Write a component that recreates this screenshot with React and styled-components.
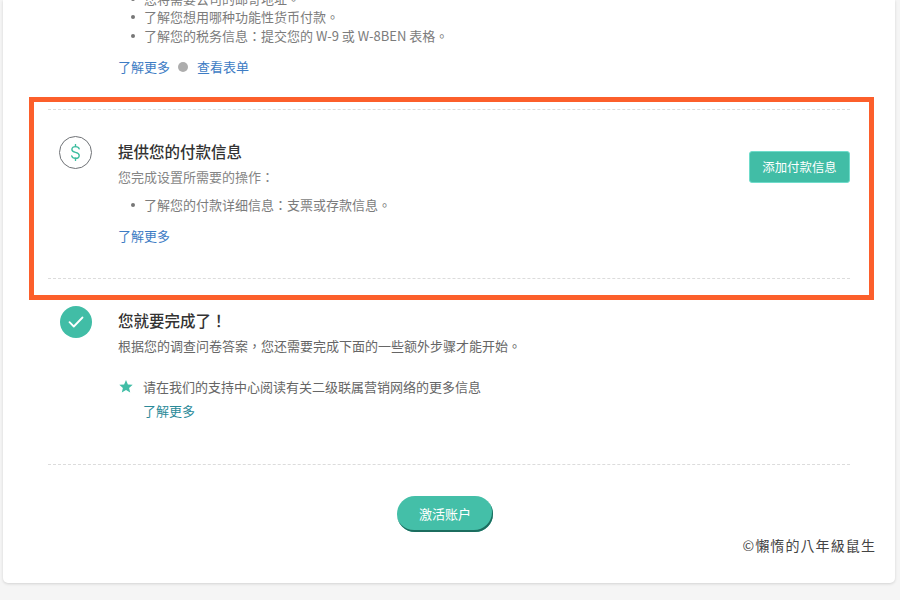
import React from 'react';
import styled, { createGlobalStyle } from 'styled-components';

const GlobalStyle = createGlobalStyle`
  html, body {
    margin: 0;
    padding: 0;
    height: 600px;
    overflow: hidden;
    background: #f5f5f5;
    font-family: "Noto Sans CJK TC", "Liberation Sans", sans-serif;
  }
`;

const Page = styled.div`
  height: 600px;
  overflow: hidden;
  padding: 0 5px 0 3px;
  box-sizing: border-box;
`;
const Card = styled.main`
  position: relative;
  display: flex;
  flex-direction: column;
  height: 583px;
  box-sizing: border-box;
  padding: 0 45px;
  background: #fff;
  border-radius: 0 0 5px 5px;
  box-shadow: 0 1px 3px rgba(0, 0, 0, 0.14);
`;
const Highlight = styled.div`
  position: absolute;
  left: 26px;
  top: 97px;
  width: 845px;
  height: 203px;
  box-sizing: border-box;
  border: 5px solid #fc5f2b;
  pointer-events: none;
`;
const TopBlock = styled.section`
  height: 109px;
  padding-left: 70px;
  overflow: hidden;
  box-sizing: border-box;
`;
const BulletList = styled.ul`
  margin: ${(p) => p.$margin || '0'};
  padding: 0 0 0 26px;
  list-style: none;
  color: #7c7c7c;
  font-size: 13px;
  line-height: 18.3px;
`;
const Bullet = styled.li`
  position: relative;
  white-space: nowrap;
  &::before {
    content: '';
    position: absolute;
    left: -13px;
    top: 7px;
    width: 4px;
    height: 4px;
    border-radius: 50%;
    background: #777;
  }
`;
const LinkRow = styled.div`
  display: flex;
  align-items: center;
  gap: 8px;
  margin-top: ${(p) => p.$top || '13px'};
  height: 18px;
`;
const MoreLink = styled.a`
  color: ${(p) => p.$color || '#3d7cc4'};
  font-size: 13px;
  line-height: 18px;
`;
const Dot = styled.span`
  width: 10px;
  height: 10px;
  margin-right: 1px;
  border-radius: 50%;
  background: #adadad;
`;
const Rule = styled.hr`
  margin: 0;
  height: 0;
  flex: none;
  border: 0;
  border-top: 1px dashed #dcdcdc;
`;
const PaySection = styled.section`
  display: flex;
  height: 168px;
  padding-top: 26px;
  box-sizing: border-box;
`;
const DoneSection = styled.section`
  display: flex;
  height: 185px;
  padding-top: 27px;
  box-sizing: border-box;
`;
const IconCell = styled.div`
  flex: none;
  width: 70px;
  padding-left: 11px;
  box-sizing: border-box;
`;
const Ring = styled.div`
  display: flex;
  align-items: center;
  justify-content: center;
  width: 33px;
  height: 33px;
  box-sizing: border-box;
  border: 1px solid #6f7276;
  border-radius: 50%;
  color: #3dbd9f;
`;
const CheckDisc = styled(Ring)`
  width: 32px;
  height: 32px;
  margin-left: 1px;
  border: 0;
  background: #41bda6;
  color: #fff;
`;
const Body = styled.div`
  flex: 1;
  min-width: 0;
`;
const Title = styled.h3`
  margin: ${(p) => p.$margin || '4px 0 0'};
  color: #333;
  font-size: 15.5px;
  line-height: 22px;
  font-weight: 500;
`;
const Intro = styled.p`
  margin: ${(p) => p.$margin || '6px 0 0'};
  color: ${(p) => p.$color || '#858585'};
  font-size: 13px;
  line-height: 18px;
  white-space: nowrap;
`;
const SolidButton = styled.button`
  flex: none;
  align-self: flex-start;
  width: 101px;
  height: 32px;
  margin-top: 15px;
  padding: 0 0 1px;
  border: 1px solid #6fdccb;
  border-radius: 3px;
  background: #41bda6;
  color: #fff;
  font-family: inherit;
  font-size: 12.4px;
`;
const StarRow = styled.div`
  display: flex;
  gap: 10px;
  margin-top: 22px;
  padding-left: 1px;
  align-items: center;
  height: 18px;
  color: #666;
  font-size: 13px;
  white-space: nowrap;
`;
const Indent = styled.div`
  padding-left: 25px;
  margin-top: 2px;
`;
const Footer = styled.div`
  display: flex;
  justify-content: center;
  padding: 31px 8px 0 0;
`;
const PillButton = styled.button`
  width: 96px;
  height: 36px;
  padding: 0 0 2px;
  border: 0;
  border-radius: 18px;
  background: #44bfa8;
  box-shadow: inset -1px -2px 0 #1c6d5f;
  color: #fff;
  font-family: inherit;
  font-size: 13px;
`;
const Credit = styled.div`
  position: absolute;
  right: 19px;
  top: 535px;
  color: #444;
  font-size: 14px;
  line-height: 20px;
  letter-spacing: 1.1px;
`;

const Dollar = () => (
  <svg width="13" height="17" viewBox="0 0 13 17" fill="none" stroke="currentColor" strokeWidth="1.4" strokeLinecap="round">
    <path d="M10.2 4.9C9.8 3.4 8.3 2.6 6.5 2.6 4.4 2.6 2.9 3.7 2.9 5.4c0 1.8 1.6 2.5 3.6 3 2.1.5 3.7 1.2 3.7 3 0 1.7-1.6 2.9-3.7 2.9-1.9 0-3.4-.8-3.8-2.4" />
    <path d="M6.5 .6v2M6.5 14.3v2.1" />
  </svg>
);
const Check = () => (
  <svg width="16" height="12" viewBox="0 0 16 12" fill="none" stroke="currentColor" strokeWidth="1.8" strokeLinecap="round" strokeLinejoin="round">
    <path d="M1.5 6.2 5.8 10.5 14.5 1.5" />
  </svg>
);
const Star = () => (
  <svg width="14" height="13" viewBox="0 0 14 13" fill="#41bda6">
    <path d="M7 0l1.9 4.4 4.8.4-3.6 3.1 1.1 4.7L7 10.1l-4.2 2.5 1.1-4.7L.3 4.8l4.8-.4z" />
  </svg>
);

const App = () => (
  <Page>
    <GlobalStyle />
    <Card>
      <TopBlock>
        <BulletList $margin="-10px 0 0">
          <Bullet>您将需要公司的邮寄地址。</Bullet>
          <Bullet>了解您想用哪种功能性货币付款。</Bullet>
          <Bullet>了解您的税务信息：提交您的 W-9 或 W-8BEN 表格。</Bullet>
        </BulletList>
        <LinkRow>
          <MoreLink>了解更多</MoreLink>
          <Dot />
          <MoreLink>查看表单</MoreLink>
        </LinkRow>
      </TopBlock>
      <Rule />
      <PaySection>
        <IconCell>
          <Ring><Dollar /></Ring>
        </IconCell>
        <Body>
          <Title>提供您的付款信息</Title>
          <Intro>您完成设置所需要的操作：</Intro>
          <BulletList $margin="10px 0 0">
            <Bullet>了解您的付款详细信息：支票或存款信息。</Bullet>
          </BulletList>
          <LinkRow $top="13px">
            <MoreLink>了解更多</MoreLink>
          </LinkRow>
        </Body>
        <SolidButton>添加付款信息</SolidButton>
      </PaySection>
      <Rule />
      <DoneSection>
        <IconCell>
          <CheckDisc><Check /></CheckDisc>
        </IconCell>
        <Body>
          <Title $margin="3px 0 0">您就要完成了！</Title>
          <Intro $color="#666" $margin="6px 0 0">根据您的调查问卷答案，您还需要完成下面的一些额外步骤才能开始。</Intro>
          <StarRow>
            <Star />
            请在我们的支持中心阅读有关二级联属营销网络的更多信息
          </StarRow>
          <Indent>
            <MoreLink $color="#2b8a99">了解更多</MoreLink>
          </Indent>
        </Body>
      </DoneSection>
      <Rule />
      <Footer>
        <PillButton>激活账户</PillButton>
      </Footer>
      <Credit>©懶惰的八年級鼠生</Credit>
      <Highlight />
    </Card>
  </Page>
);

export default App;
